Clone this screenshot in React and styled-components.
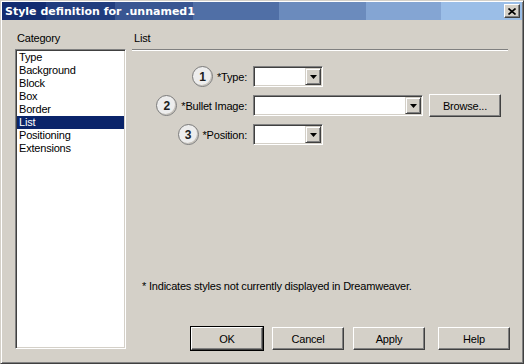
import React from "react";
import styled, { createGlobalStyle, css } from "styled-components";

const GlobalStyle = createGlobalStyle`
  html, body {
    margin: 0;
    padding: 0;
    background: #d4d0c8;
  }
  body {
    font-family: "Liberation Sans", Arial, sans-serif;
    font-size: 11px;
    letter-spacing: -0.2px;
    color: #000;
  }
`;

const raised = css`
  border: 1px solid;
  border-color: #ffffff #404040 #404040 #ffffff;
  box-shadow: inset -1px -1px #808080;
`;

const sunken = css`
  border: 1px solid;
  border-color: #808080 #ffffff #ffffff #808080;
  box-shadow: inset 1px 1px #404040, inset -1px -1px #d4d0c8;
`;

const Window = styled.div`
  width: 524px;
  height: 364px;
  box-sizing: border-box;
  background: #d4d0c8;
  border: 1px solid;
  border-color: #d4d0c8 #404040 #404040 #d4d0c8;
  box-shadow: inset 1px 1px #ffffff, inset -1px -1px #808080;
  padding: 1px;
  display: flex;
  flex-direction: column;
`;

const TitleBar = styled.div`
  height: 18px;
  display: flex;
  align-items: center;
  justify-content: space-between;
  padding: 0 2px 0 3px;
  background: linear-gradient(
    to right,
    #122c71 0px,
    #122c71 44px,
    #213d7e 44px,
    #213d7e 113px,
    #395692 113px,
    #395692 191px,
    #506fa6 191px,
    #506fa6 277px,
    #6b8bbd 277px,
    #6b8bbd 364px,
    #84a5d3 364px,
    #84a5d3 439px,
    #9bbee7 439px
  );
`;

const TitleText = styled.span`
  color: #fff;
  font-family: "DejaVu Sans", "Liberation Sans", sans-serif;
  font-weight: bold;
  font-size: 11px;
  letter-spacing: 0;
`;

const CloseButton = styled.div`
  ${raised};
  box-sizing: border-box;
  width: 16px;
  height: 14px;
  background: #d4d0c8;
  display: flex;
  align-items: center;
  justify-content: center;
`;

const Body = styled.div`
  flex: 1;
  display: flex;
  gap: 6px;
  padding: 12px 11px 0 13px;
`;

const LeftCol = styled.div`
  width: 111px;
  display: flex;
  flex-direction: column;
`;

const RightCol = styled.div`
  flex: 1;
  display: flex;
  flex-direction: column;
`;

const Caption = styled.div`
  line-height: 13px;
  padding-left: 2px;
`;

const ListBox = styled.div`
  ${sunken};
  box-sizing: border-box;
  margin-top: 4px;
  height: 300px;
  background: #fff;
  padding: 1px;
`;

const ListItem = styled.div`
  height: 13px;
  line-height: 13px;
  padding-left: 2px;
  background: ${(p) => (p.selected ? "#0a246a" : "transparent")};
  color: ${(p) => (p.selected ? "#fff" : "#000")};
`;

const Separator = styled.div`
  margin: 4px 3px 0 0;
  border-top: 1px solid #808080;
  border-bottom: 1px solid #ffffff;
`;

const Form = styled.div`
  margin-top: 15px;
  display: grid;
  grid-template-columns: 115px auto;
  column-gap: 6px;
  row-gap: 7px;
  align-items: center;
`;

const LabelCell = styled.div`
  display: flex;
  justify-content: flex-end;
  align-items: center;
  gap: 4px;
`;

const Badge = styled.div`
  box-sizing: border-box;
  width: 21px;
  height: 21px;
  border-radius: 50%;
  border: 1px solid #7a7a7a;
  background: #ededed;
  box-shadow: inset -1px -1px #c4c0b8;
  display: flex;
  align-items: center;
  justify-content: center;
  font-size: 12px;
  font-weight: bold;
  letter-spacing: 0;
  color: #202020;
`;

const FieldCell = styled.div`
  display: flex;
  align-items: center;
  gap: 6px;
`;

const Select = styled.div`
  ${sunken};
  box-sizing: border-box;
  width: ${(p) => p.width}px;
  height: 21px;
  padding: 1px;
  background: #fff;
  display: flex;
  justify-content: flex-end;
`;

const ArrowButton = styled.div`
  ${raised};
  border-color: #d4d0c8 #404040 #404040 #d4d0c8;
  box-shadow: inset 1px 1px #ffffff, inset -1px -1px #808080;
  box-sizing: border-box;
  width: 16px;
  height: 17px;
  background: #d4d0c8;
  display: flex;
  align-items: center;
  justify-content: center;
`;

const Button = styled.div`
  ${raised};
  box-sizing: border-box;
  width: 72px;
  height: 23px;
  background: #d4d0c8;
  display: flex;
  align-items: center;
  justify-content: center;
  margin-left: ${(p) => p.offset || 0}px;
  ${(p) =>
    p.primary &&
    css`
      outline: 1px solid #000;
      outline-offset: 0;
    `}
`;

const Footnote = styled.div`
  margin-top: 135px;
  padding-left: 10px;
  line-height: 13px;
`;

const ButtonRow = styled.div`
  margin-top: 34px;
  display: flex;
  justify-content: flex-end;
  padding-right: 1px;
`;

const Arrow = () => (
  <svg width="7" height="4" viewBox="0 0 7 4">
    <path d="M0 0h7L3.5 4z" fill="#000" />
  </svg>
);

const Combo = ({ width }) => (
  <Select width={width}>
    <ArrowButton>
      <Arrow />
    </ArrowButton>
  </Select>
);

const categories = [
  "Type",
  "Background",
  "Block",
  "Box",
  "Border",
  "List",
  "Positioning",
  "Extensions",
];

const App = () => (
  <>
    <GlobalStyle />
    <Window>
      <TitleBar>
        <TitleText>Style definition for .unnamed1</TitleText>
        <CloseButton>
          <svg width="8" height="7" viewBox="0 0 8 7">
            <path d="M0.5 0.5L7.5 6.5M7.5 0.5L0.5 6.5" stroke="#000" strokeWidth="1.6" />
          </svg>
        </CloseButton>
      </TitleBar>
      <Body>
        <LeftCol>
          <Caption>Category</Caption>
          <ListBox>
            {categories.map((c) => (
              <ListItem key={c} selected={c === "List"}>
                {c}
              </ListItem>
            ))}
          </ListBox>
        </LeftCol>
        <RightCol>
          <Caption>List</Caption>
          <Separator />
          <Form>
            <LabelCell>
              <Badge>1</Badge>
              <span>*Type:</span>
            </LabelCell>
            <FieldCell>
              <Combo width={70} />
            </FieldCell>

            <LabelCell>
              <Badge>2</Badge>
              <span>*Bullet Image:</span>
            </LabelCell>
            <FieldCell>
              <Combo width={170} />
              <Button>Browse...</Button>
            </FieldCell>

            <LabelCell>
              <Badge>3</Badge>
              <span>*Position:</span>
            </LabelCell>
            <FieldCell>
              <Combo width={70} />
            </FieldCell>
          </Form>
          <Footnote>
            * Indicates styles not currently displayed in Dreamweaver.
          </Footnote>
          <ButtonRow>
            <Button primary>OK</Button>
            <Button offset={9}>Cancel</Button>
            <Button offset={9}>Apply</Button>
            <Button offset={13}>Help</Button>
          </ButtonRow>
        </RightCol>
      </Body>
    </Window>
  </>
);

export default App;
